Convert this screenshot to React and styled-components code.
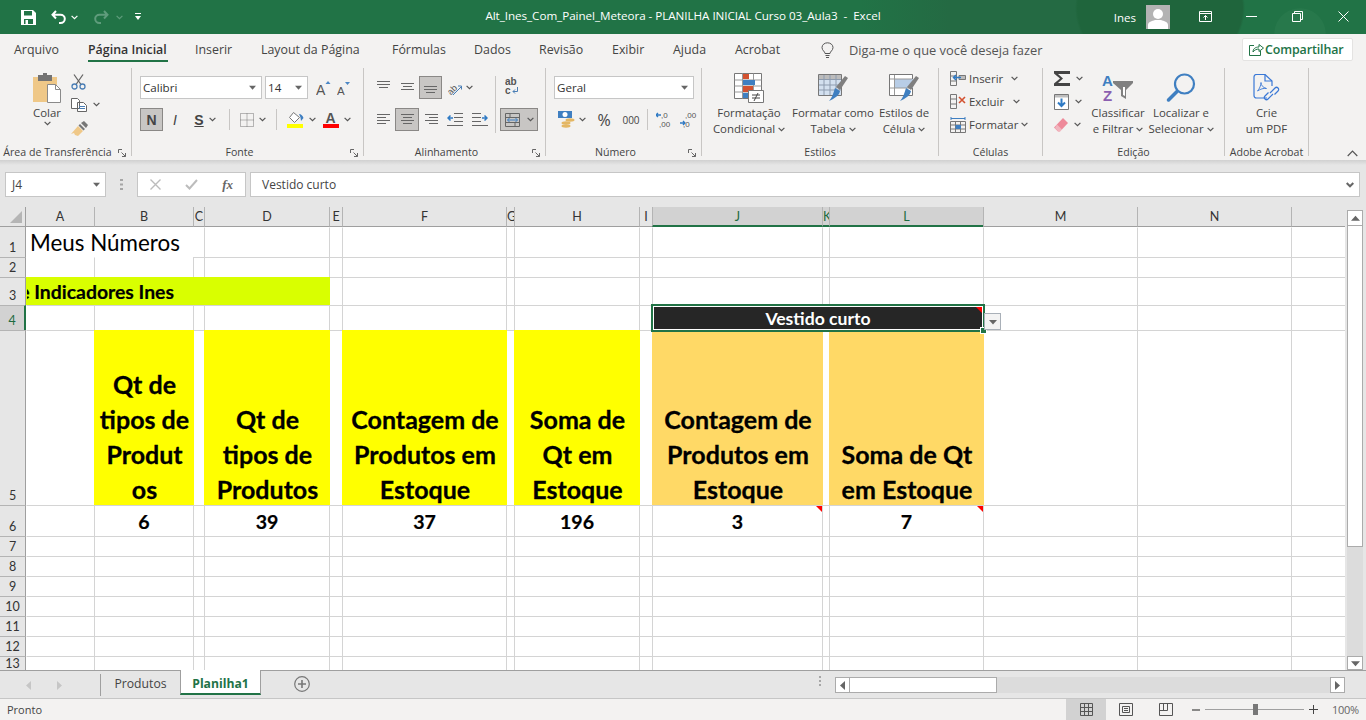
import React from 'react'
import styled, { createGlobalStyle } from 'styled-components'

const UI = `"Open Sans", "Noto Sans", sans-serif`
const SHEET = `Lato, "Liberation Sans", sans-serif`
const GREEN = '#217346'

const Global = createGlobalStyle`
  html, body { margin: 0; padding: 0; background: #fff; }
  body { font-family: ${UI}; overflow: hidden; }
  * { box-sizing: border-box; }
`

const Page = styled.div`
  width: 1366px;
  height: 720px;
  display: flex;
  flex-direction: column;
  overflow: hidden;
`

/* title bar */
const TitleBar = styled.div`
  height: 34px;
  flex: none;
  display: grid;
  grid-template-columns: 1fr auto 1fr;
  align-items: center;
  color: #fff;
  background:
    radial-gradient(ellipse 85px 70px at 1160px 8px, #1f653c 97%, transparent 100%),
    radial-gradient(circle 26px at 1300px 34px, #27784b 97%, transparent 100%),
    linear-gradient(90deg, ${GREEN} 0, ${GREEN} 860px, #246a43 950px, #246a43 1090px, ${GREEN} 1230px);
`
const Qat = styled.div`
  display: flex;
  align-items: center;
  padding-left: 21px;
`
const WinTitle = styled.div`
  font-size: 11.67px;
  white-space: pre;
  letter-spacing: -0.05px;
  padding-bottom: 3px;
`
const WinRight = styled.div`
  display: flex;
  align-items: center;
  justify-content: flex-end;
  font-size: 11.5px;
`
const Avatar = styled.div`
  width: 24px;
  height: 24px;
  margin-left: 10px;
  background: #b3b3b3;
  display: flex;
  align-items: flex-end;
  justify-content: center;
  margin-right: 12px;
`
const WinBtn = styled.div`
  width: 46px;
  height: 34px;
  display: flex;
  align-items: center;
  justify-content: center;
  padding-bottom: 1px;
`

/* tabs */
const TabRow = styled.div`
  height: 34px;
  flex: none;
  display: flex;
  align-items: flex-start;
  background: #f3f2f1;
  padding-left: 14px;
`
const Tab = styled.div`
  width: ${p => p.$w}px;
  height: 28px;
  font-size: 12.4px;
  line-height: 32px;
  color: #444;
  white-space: nowrap;
  flex: none;
`
const ActiveTabText = styled.span`
  display: inline-block;
  height: 28px;
  width: 80px;
  color: #333;
  font-weight: 600;
  letter-spacing: 0;
  border-bottom: 2px solid ${GREEN};
`
const Tell = styled.div`
  display: flex;
  align-items: center;
  gap: 15px;
  height: 32px;
  font-size: 12.85px;
  color: #555;
  white-space: nowrap;
`
const ShareBtn = styled.div`
  margin: 4px 13px 0 auto;
  width: 111px;
  height: 23px;
  background: #fff;
  border: 1px solid #e4e3e2;
  border-radius: 2px;
  display: flex;
  align-items: center;
  gap: 1px;
  padding-left: 6px;
  font-size: 12.4px;
  font-weight: 600;
  color: ${GREEN};
  letter-spacing: -0.1px;
`

/* ribbon */
const Ribbon = styled.div`
  height: 92px;
  flex: none;
  display: flex;
  background: #f3f2f1;
  padding-bottom: 4px;
`
const Group = styled.div`
  width: ${p => p.$w}px;
  flex: none;
  display: flex;
  flex-direction: column;
  border-right: 1px solid #c8c6c4;
`
const GroupBody = styled.div`
  flex: 1;
  display: flex;
  min-height: 0;
  padding-left: ${p => p.$pl || 0}px;
`
const GroupLabel = styled.div`
  height: 16px;
  padding-top: 5px;
  display: grid;
  grid-template-columns: 1fr ${p => (p.$launcher ? '16px' : '')};
  font-size: 10.6px;
  line-height: 15px;
  color: #444;
  text-align: center;
  white-space: nowrap;
`
const Launcher = styled.div`
  display: flex;
  align-items: center;
  justify-content: flex-start;
  padding-left: 3px;
`
const Stack = styled.div`
  display: flex;
  flex-direction: column;
  padding-top: ${p => p.$pt ?? 8}px;
  gap: ${p => p.$gap ?? 9}px;
  width: ${p => (p.$w ? `${p.$w}px` : 'auto')};
  flex: none;
`
const Row = styled.div`
  display: flex;
  align-items: center;
  height: 23px;
`
const Select = styled.div`
  width: ${p => p.$w}px;
  height: 23px;
  margin-right: ${p => p.$mr || 0}px;
  background: #fff;
  border: 1px solid #c6c6c6;
  display: flex;
  align-items: center;
  justify-content: space-between;
  padding: 0 5px 0 2px;
  font-size: 11.6px;
  color: #333;
  flex: none;
`
const Tool = styled.div`
  width: ${p => p.$w}px;
  height: 23px;
  flex: none;
  margin-left: ${p => p.$ml || 0}px;
  display: flex;
  align-items: center;
  justify-content: center;
  gap: ${p => p.$gap ?? 5}px;
  color: #444;
  ${p => p.$on && `
    background: #c8c6c4;
    border: 1px solid #8a8886;
  `}
`
const Letter = styled.span`
  font-family: "Liberation Sans", sans-serif;
  font-size: 14px;
  line-height: 1;
  color: #444;
  font-weight: ${p => (p.$b ? 700 : 400)};
  font-style: ${p => (p.$i ? 'italic' : 'normal')};
  text-decoration: ${p => (p.$u ? 'underline' : 'none')};
`
const NumGlyph = styled.span`
  font-size: ${p => p.$s}px;
  color: #444;
`
const VSep = styled.div`
  width: 1px;
  height: 21px;
  background: #c8c6c4;
  flex: none;
  margin: 0 ${p => p.$m || 0}px;
`
const TallSep = styled.div`
  width: 1px;
  height: 57px;
  background: #c8c6c4;
  margin-top: 8px;
  flex: none;
`
const Big = styled.div`
  width: ${p => p.$w}px;
  flex: none;
  display: flex;
  flex-direction: column;
  align-items: center;
  padding-top: 3px;
  font-size: 11.4px;
  line-height: 16px;
  color: #444;
  white-space: nowrap;
`
const BigIcon = styled.div`
  height: 34px;
  display: flex;
  align-items: center;
  justify-content: center;
`
const BigLine = styled.div`
  display: flex;
  align-items: center;
  gap: 3px;
`
const CellTool = styled.div`
  height: 23px;
  display: flex;
  align-items: center;
  font-size: 11.4px;
  color: #444;
`
const CellToolText = styled.span`
  width: ${p => p.$w}px;
  margin-left: 3px;
  white-space: nowrap;
`
const SmallCol = styled.div`
  display: flex;
  flex-direction: column;
  padding-top: ${p => p.$pt ?? 0}px;
  margin-top: ${p => p.$mt ?? 0}px;
  margin-left: ${p => p.$ml || 0}px;
  width: ${p => (p.$w ? `${p.$w}px` : 'auto')};
  flex: none;
`
const ClipTool = styled.div`
  height: ${p => p.$h}px;
  display: flex;
  align-items: center;
  gap: 6px;
`
const Collapse = styled.div`
  margin: 0 8px -3px auto;
  align-self: flex-end;
  height: 12px;
  display: flex;
  align-items: center;
`

/* formula bar */
const FormulaBar = styled.div`
  height: 47px;
  background: linear-gradient(#d0d0d0 0, #e6e6e6 5px);
  display: flex;
  align-items: flex-start;
  padding: 12px 6px 0 5px;
  flex: none;
`
const NameBox = styled.div`
  width: 101px;
  height: 25px;
  background: #fff;
  border: 1px solid #c6c6c6;
  display: flex;
  align-items: center;
  justify-content: space-between;
  padding: 0 5px 0 6px;
  font-size: 12px;
  color: #444;
`
const Dots = styled.div`
  width: 31px;
  height: 25px;
  display: flex;
  align-items: center;
  justify-content: center;
`
const FxBox = styled.div`
  width: 109px;
  height: 25px;
  background: #fff;
  border: 1px solid #c6c6c6;
  display: flex;
  align-items: center;
  justify-content: space-between;
  padding: 0 12px 0 12px;
`
const FxText = styled.span`
  font-family: "Liberation Serif", serif;
  font-style: italic;
  font-weight: 700;
  font-size: 13px;
  color: #666;
`
const FormulaInput = styled.div`
  flex: 1;
  margin-left: 4px;
  height: 25px;
  background: #fff;
  border: 1px solid #c6c6c6;
  display: flex;
  align-items: center;
  justify-content: space-between;
  padding: 0 5px 0 11px;
  font-size: 12px;
  color: #444;
`

/* sheet */
const SheetArea = styled.div`
  height: 463px;
  display: flex;
  flex: none;
  background: #e6e6e6;
`
const SheetGrid = styled.div`
  width: 1345px;
  height: 463px;
  flex: none;
  overflow: hidden;
  display: grid;
  grid-template-columns: 26px 68px 99px 11px 125px 13px 164px 8px 125px 13px 170px 7px 154px 154px 154px 54px;
  grid-template-rows: 20px 30px 20px 28px 25px 175px 31px 20px 20px 20px 20px 20px 20px 14px;
  font-family: ${SHEET};
  background: #fff;
`
const Corner = styled.div`
  background: #e6e6e6;
  border-right: 1px solid #9f9f9f;
  border-bottom: 1px solid #9f9f9f;
  display: flex;
  align-items: flex-end;
  justify-content: flex-end;
  padding: 0 3px 3px 0;
`
const ColHead = styled.div`
  background: ${p => (p.$sel ? '#d2d2d2' : '#e6e6e6')};
  border-left: ${p => (p.$first ? 'none' : '1px solid #b4b4b4')};
  border-bottom: ${p => (p.$sel ? `2px solid ${GREEN}` : '1px solid #9f9f9f')};
  color: ${p => (p.$sel ? '#1d6b40' : '#333')};
  font-size: 12.5px;
  text-align: center;
  line-height: 20px;
  overflow: hidden;
`
const RowHead = styled.div`
  background: ${p => (p.$sel ? '#d2d2d2' : '#e6e6e6')};
  border-top: ${p => (p.$first ? 'none' : '1px solid #b4b4b4')};
  border-right: ${p => (p.$sel ? `2px solid ${GREEN}` : '1px solid #9f9f9f')};
  color: ${p => (p.$sel ? '#1d6b40' : '#333')};
  font-size: 12.5px;
  line-height: 19px;
  display: flex;
  align-items: flex-end;
  justify-content: center;
  overflow: hidden;
  ${p => p.$clip && 'align-items: flex-start; line-height: 14px;'}
`
const Cell = styled.div`
  position: relative;
  min-width: 0;
  min-height: 0;
  grid-column: span ${p => p.$span || 1};
  border-left: 1px solid ${p => p.$fill || (p.$noLeft ? 'transparent' : '#d4d4d4')};
  border-top: 1px solid ${p => p.$fill || (p.$noTop ? 'transparent' : '#d4d4d4')};
  ${p => p.$fill && `
    background: ${p.$fill};
    margin-right: -1px;
    z-index: 1;
  `}
`
const TitleCell = styled(Cell)`
  font-size: 22.4px;
  line-height: 28px;
  padding: 1px 0 0 3px;
  color: #000;
  white-space: nowrap;
  overflow: visible;
`
const BannerCell = styled(Cell)`
  display: flex;
  align-items: center;
  justify-content: flex-end;
  padding-right: 156px;
  font-size: 19.4px;
  font-weight: 700;
  -webkit-text-stroke: 0.2px #000;
  color: #000;
  overflow: hidden;
  white-space: nowrap;
`
const HeadCell = styled(Cell)`
  display: flex;
  align-items: flex-end;
  justify-content: center;
  text-align: center;
  font-size: 25px;
  line-height: 35px;
  font-weight: 700;
  -webkit-text-stroke: 0.3px #000;
  color: #000;
  white-space: nowrap;
`
const HeadLines = styled.div`
  margin-bottom: -2px;
`
const ValueCell = styled(Cell)`
  display: flex;
  align-items: center;
  justify-content: center;
  font-size: 19.6px;
  font-weight: 700;
  -webkit-text-stroke: 0.2px #000;
  color: #000;
  padding-top: 1px;
`
const Note = styled.i`
  position: absolute;
  top: ${p => p.$t ?? 0}px;
  right: ${p => p.$r ?? 0}px;
  width: 0;
  height: 0;
  border-top: 6px solid #f00;
  border-left: 6px solid transparent;
`
const Selection = styled.div`
  position: absolute;
  left: -2px;
  top: -2px;
  right: -2px;
  bottom: -2px;
  border: 2px solid ${GREEN};
  box-shadow: inset 0 0 0 1px #fff;
  background: #262626;
  color: #fff;
  font-size: 17.6px;
  font-weight: 700;
  display: flex;
  align-items: center;
  justify-content: center;
  z-index: 3;
`
const FillHandle = styled.i`
  position: absolute;
  right: -4px;
  bottom: -4px;
  width: 7px;
  height: 7px;
  background: ${GREEN};
  border: 1px solid #fff;
`
const DropBtn = styled.div`
  position: absolute;
  left: calc(100% + 1px);
  bottom: 0;
  width: 17px;
  height: 17px;
  background: #f3f3f3;
  border: 1px solid #a9b0b8;
  display: flex;
  align-items: center;
  justify-content: center;
`

/* scrollbars */
const VScroll = styled.div`
  width: 21px;
  flex: none;
  display: flex;
  flex-direction: column;
  padding: 3px 3px 0 2px;
`
const ScrollBtn = styled.div`
  height: ${p => p.$h || 16}px;
  width: ${p => p.$w || 16}px;
  background: #fff;
  border: 1px solid #ababab;
  display: flex;
  align-items: center;
  justify-content: center;
  flex: none;
`
const VThumb = styled.div`
  height: 321px;
  background: #fff;
  border: 1px solid #ababab;
  border-top: none;
  flex: none;
`
const VTrack = styled.div`
  flex: 1;
  background: #dcdcdc;
`

/* bottom */
const SheetTabs = styled.div`
  height: 28px;
  flex: none;
  background: #e6e6e6;
  border-top: 1px solid #9f9f9f;
  display: flex;
  align-items: flex-start;
`
const NavArrows = styled.div`
  width: 101px;
  height: 22px;
  border-right: 1px solid #9f9f9f;
  display: flex;
  align-items: center;
  gap: 26px;
  padding-left: 26px;
  margin-top: 3px;
`
const SheetTab = styled.div`
  height: 24px;
  width: ${p => p.$w}px;
  text-align: center;
  font-family: ${UI};
  font-size: 12.2px;
  line-height: 26px;
  flex: none;
  color: #444;
  ${p => p.$active && `
    background: #fff;
    color: ${GREEN};
    font-weight: 700;
    border-left: 1px solid #9f9f9f;
    border-right: 1px solid #9f9f9f;
    border-bottom: 2px solid ${GREEN};
    margin-top: -1px;
    height: 25px;
    line-height: 27px;
  `}
`
const AddSheet = styled.div`
  margin-left: 33px;
  margin-top: 5px;
  display: flex;
`
const HSplit = styled.div`
  margin-left: auto;
  margin-top: 5px;
  width: 30px;
  display: flex;
  justify-content: center;
`
const HScroll = styled.div`
  width: 510px;
  margin-right: 21px;
  margin-top: 6px;
  height: 16px;
  display: flex;
  background: #dcdcdc;
`
const HThumb = styled.div`
  width: 147px;
  background: #fff;
  border: 1px solid #ababab;
  border-left: none;
  flex: none;
`
const HTrack = styled.div`
  flex: 1;
`
const StatusBar = styled.div`
  height: 22px;
  flex: none;
  background: #f3f2f1;
  border-top: 1px solid #c6c6c6;
  display: flex;
  align-items: center;
  padding-left: 7px;
  font-size: 11px;
  color: #444;
`
const Views = styled.div`
  margin-left: auto;
  display: flex;
`
const ViewBtn = styled.div`
  width: 40px;
  height: 21px;
  flex: none;
  display: flex;
  align-items: center;
  justify-content: center;
  background: ${p => (p.$on ? '#d2d2d2' : 'transparent')};
`
const Zoom = styled.div`
  margin: 0 6px 0 6px;
  display: flex;
  align-items: center;
`
const ZoomTrack = styled.div`
  width: 99px;
  height: 1px;
  margin: 0 5px;
  background: #a0a0a0;
  position: relative;
`
const ZoomThumb = styled.i`
  position: absolute;
  left: 48px;
  top: -5px;
  width: 5px;
  height: 11px;
  background: #777;
`
const ZoomPct = styled.span`
  margin-left: 14px;
  width: 28px;
  color: #666;
  white-space: nowrap;
  letter-spacing: -0.3px;
`
const Mirror = styled.span`
  display: flex;
  transform: scaleX(-1);
`
const TriSvg = styled.svg`
  transform: rotate(${p => p.$r || 0}deg);
`

/* icons */
const Chev = ({ c = '#555', w = 7 }) => (
  <svg width={w} height="5" viewBox="0 0 7 5" fill="none" stroke={c} strokeWidth="1.2"><path d="M.6.8 3.5 3.7 6.4.8" /></svg>
)
const Tri = ({ c = '#666', r = 0, s = 7 }) => (
  <TriSvg $r={r} width={s} height={s} viewBox="0 0 8 8" fill={c}><path d="M0 2h8L4 6.500z" /></TriSvg>
)
const SaveIcon = () => (
  <svg width="15" height="15" viewBox="0 0 15 15">
    <path fill="#fff" d="M0 0h12l3 3v12H0z" />
    <path fill={GREEN} d="M3 1h8v4.500H3zM3 9h9v5H3z" />
    <path fill="#fff" d="M4.500 10h2.500v4H4.500z" />
  </svg>
)
const UndoIcon = ({ c = '#fff' }) => (
  <svg width="15" height="14" viewBox="0 0 15 14" fill="none" stroke={c} strokeWidth="2"><path d="M5 1 1.500 4.800 5 8.500M1.500 4.800H9.500C12 4.800 13.800 6.500 13.800 8.800 13.800 11 12 13 9.500 13H8" /></svg>
)
const RedoIcon = () => (
  <svg width="15" height="14" viewBox="0 0 15 14" fill="none" stroke="#5f9c7c" strokeWidth="2"><path d="M10 1l3.500 3.800L10 8.500M13.500 4.800H5.500C3 4.800 1.200 6.500 1.200 8.800 1.200 11 3 13 5.500 13H7" /></svg>
)
const QatMore = () => (
  <svg width="6" height="8" viewBox="0 0 6 8" fill="#fff"><path d="M0 0h6v1H0zM0 3h6L3 7z" /></svg>
)
const PersonIcon = () => (
  <svg width="22" height="21" viewBox="0 0 22 21" fill="#fff"><circle cx="11" cy="6" r="5" /><path d="M1 21v-4c0-3 4-4 7-5h6c3 1 7 2 7 5v4z" /></svg>
)
const RibbonModeIcon = () => (
  <svg width="13" height="11" viewBox="0 0 13 11" fill="none" stroke="#fff"><path d="M.5.500h12v10H.500zM.5 2.500h12M6.500 9V4.500M4.500 6.500l2-2 2 2" /></svg>
)
const MinIcon = () => <svg width="11" height="1"><path d="M0 .5h11" stroke="#fff" /></svg>
const RestoreIcon = () => (
  <svg width="11" height="11" viewBox="0 0 11 11" fill="none" stroke="#fff"><path d="M.5 2.500h8v8h-8zM2.500 2.500v-2h8v8h-2" /></svg>
)
const CloseIcon = () => (
  <svg width="11" height="11" viewBox="0 0 11 11" stroke="#fff"><path d="M.5.500l10 10M10.500.500l-10 10" /></svg>
)
const BulbIcon = () => (
  <svg width="13" height="17" viewBox="0 0 13 17" fill="none" stroke="#555"><path d="M4 11.500C4 9.500 1 8.500 1 5.500 1 2.800 3.500.800 6.500.800S12 2.800 12 5.500c0 3-3 4-3 6zM4.500 13.500h4M5 15.500h3" /></svg>
)
const ShareIcon = () => (
  <svg width="15" height="13" viewBox="0 0 15 13" fill="none" stroke={GREEN}><path d="M5 2.500H.5v10h11V8M4 9c0-3 2-5 6-5V1.500L14.500 5 10 8.500V6C7.500 6 5.500 7 4 9z" /></svg>
)
const PasteIcon = () => (
  <svg width="30" height="30" viewBox="0 0 30 30">
    <path fill="#efc888" d="M1 4h24v25H1z" />
    <path fill="#737373" d="M6 2h5V0h4v2h5v6H6z" />
    <path fill="#fff" stroke="#8a8a8a" d="M15.500 11.500h8l5 5v13h-13z" />
    <path fill="none" stroke="#8a8a8a" d="M23.500 11.500v5h5" />
  </svg>
)
const CutIcon = () => (
  <svg width="15" height="16" viewBox="0 0 15 16" fill="none">
    <path stroke="#666" strokeWidth="1.300" d="M3 .500l7 10M12 .500l-7 10" />
    <circle cx="3.500" cy="12.500" r="2.500" stroke="#4a7eb5" strokeWidth="1.300" />
    <circle cx="11.500" cy="12.500" r="2.500" stroke="#4a7eb5" strokeWidth="1.300" />
  </svg>
)
const CopyIcon = () => (
  <svg width="16" height="14" viewBox="0 0 16 14" fill="#fff" stroke="#666"><path d="M.5.500h6l2 2v8h-8zM6.500 4.500h6l3 3v6h-9z" /><path fill="none" stroke="#4a7eb5" d="M8 8.500h6M8 10.500h6" /></svg>
)
const PainterIcon = () => (
  <svg width="17" height="15" viewBox="0 0 17 15"><path fill="#777" d="M10 2l3-2 4 4-2 3zM9 3l5 5-1.500 1.500-5-5z" /><path fill="#efc888" d="M7 5l5 5-5 5-3-1-1-2-3 1z" /></svg>
)
const GrowIcon = () => (
  <svg width="15" height="18" viewBox="0 0 15 18"><text x="0" y="16" fontFamily="Liberation Sans" fontSize="14" fill="#555">A</text><path fill="#4a86c5" d="M9.500 5l2.500-3 2.500 3z" /></svg>
)
const ShrinkIcon = () => (
  <svg width="14" height="18" viewBox="0 0 14 18"><text x="0" y="16" fontFamily="Liberation Sans" fontSize="11.500" fill="#555">A</text><path fill="#4a86c5" d="M8 3h5l-2.500 3z" /></svg>
)
const BorderIcon = () => (
  <svg width="14" height="14" viewBox="0 0 14 14" fill="none" stroke="#777" strokeDasharray="1 1"><path d="M.5.500h13v13H.500zM7 .500v13M.5 7h13" /></svg>
)
const FillColorIcon = () => (
  <svg width="17" height="17" viewBox="0 0 17 17">
    <path fill="#fff" stroke="#777" d="M6.500 1.500l6 5-5 5-5-5z" />
    <path fill="#3f7fc1" d="M12 3c2 0 4 2 4.500 4L14 10l-.5-3.500z" />
    <path fill="#ff0" d="M0 13h16v4H0z" />
  </svg>
)
const FontColorIcon = () => (
  <svg width="16" height="17" viewBox="0 0 16 17">
    <text x="2.500" y="11.500" fontFamily="Liberation Sans" fontWeight="700" fontSize="14" fill="#555">A</text>
    <path fill="#f00" d="M0 13h16v4H0z" />
  </svg>
)
const Launch = () => (
  <svg width="8" height="8" viewBox="0 0 8 8" fill="none" stroke="#666"><path d="M.5 4V.5H4M7.500 7.500l-4-4M7.500 4v3.500H4" /></svg>
)
const Lines = ({ rows }) => (
  <svg width="15" height="15" viewBox="0 0 15 15" stroke="#666">
    {rows.map(([y, a, b]) => <path key={y} d={`M${a} ${y}.5H${b}`} />)}
  </svg>
)
const OrientIcon = () => (
  <svg width="16" height="16" viewBox="0 0 16 16">
    <text x="2" y="15" transform="rotate(-45 4 12)" fontFamily="Liberation Sans" fontSize="9" fill="#555">ab</text>
    <path fill="none" stroke="#4a7eb5" d="M7 15 15 7M12 6h3.500v3.500" />
  </svg>
)
const WrapIcon = () => (
  <svg width="14" height="19" viewBox="0 0 14 19">
    <text x="0" y="8" fontFamily="Liberation Sans" fontSize="10" fontWeight="700" fill="#555">ab</text>
    <text x="0" y="17" fontFamily="Liberation Sans" fontSize="10" fontWeight="700" fill="#555">c</text>
    <path fill="none" stroke="#4a7eb5" d="M12.500 10v4.500H8M10 12.500l-2 2 2 2" />
  </svg>
)
const MergeIcon = () => (
  <svg width="15" height="14" viewBox="0 0 15 14" fill="none">
    <path stroke="#666" d="M.5.500h14v13H.500zM.5 4.500h14M.5 9.500h14M5 .500v4M10 9.500v4" />
    <path stroke="#3f7fc1" d="M2.500 7h10M4.500 5l-2 2 2 2M10.500 5l2 2-2 2" />
  </svg>
)
const OutIcon = () => (
  <svg width="16" height="13" viewBox="0 0 16 13">
    <path stroke="#666" d="M7 .500h9M7 4.500h9M7 8.500h9M0 12.500h16" />
    <path fill="none" stroke="#2f7ac4" strokeWidth="1.500" d="M1 5h5M3.500 2.500 1 5l2.500 2.500" />
  </svg>
)
const CurrencyIcon = () => (
  <svg width="17" height="17" viewBox="0 0 17 17">
    <path fill="#3f7fc1" d="M0 0h14v7H0z" />
    <circle cx="7" cy="3.500" r="2.500" fill="#fff" />
    <ellipse cx="12" cy="9" rx="4.500" ry="1.700" fill="#e4b764" />
    <ellipse cx="8" cy="12" rx="4.500" ry="1.700" fill="#e4b764" />
    <ellipse cx="8" cy="15" rx="4.500" ry="1.700" fill="#e4b764" />
  </svg>
)
const IncDec = ({ flip }) => (
  <svg width="17" height="18" viewBox="0 0 17 18" fontFamily="Liberation Sans" fontSize="8" fill="#555">
    <text x="5" y="7">{flip ? ',00' : ',0'}</text>
    <text x="3" y="16">{flip ? ',0' : ',00'}</text>
    <path fill="none" stroke="#2f7ac4" strokeWidth="1.300" d={flip ? 'M0 12h5M3 10l2 2-2 2' : 'M0 4h5M2 2 0 4l2 2'} />
  </svg>
)
const CondIcon = () => (
  <svg width="30" height="30" viewBox="0 0 30 30">
    <path fill="#fff" stroke="#777" d="M.5.500h27v25H.500z" />
    <path stroke="#999" d="M8.500 .500v25M19.500.500v25M.5 7h27M.5 13h27M.5 19h27" />
    <path fill="#d35230" d="M9 1h6v5H9zM9 13h10v6H9z" />
    <path fill="#3f7fc1" d="M9 7h12v5H9zM9 20h5v5H9z" />
    <path fill="#fff" stroke="#777" d="M14.500 17.500h15v12h-15z" />
    <path stroke="#444" d="M18 22h8M18 25h8M24 20l-4 8" />
  </svg>
)
const TableIcon = () => (
  <svg width="30" height="30" viewBox="0 0 30 30">
    <path fill="#d3e0ef" stroke="#777" d="M.5 1.500h23v21H.500z" />
    <path fill="#bcbcbc" d="M1 2h22v4H1z" />
    <path stroke="#8e9caf" d="M6 2v20M12 2v20M18 2v20M1 6.500h22M1 12h22M1 17h22" />
    <path fill="#7f7f7f" d="M27 3l3 2-8 12-4-3z" />
    <path fill="#3f7fc1" d="M17 15l5 3c-1 5-5 7-11 10 3-3 4-7 6-13z" />
  </svg>
)
const CellStyleIcon = () => (
  <svg width="30" height="30" viewBox="0 0 30 30">
    <path fill="#fff" stroke="#777" d="M.5 1.500h23v21H.500z" />
    <path fill="#b8cde6" d="M6 6h18v9H6z" />
    <path stroke="#999" d="M5.500 2v20M1 6h22M1 15h22" />
    <path fill="#7f7f7f" d="M27 3l3 2-8 12-4-3z" />
    <path fill="#3f7fc1" d="M17 15l5 3c-1 5-5 7-11 10 3-3 4-7 6-13z" />
  </svg>
)
const InsertIcon = () => (
  <svg width="16" height="15" viewBox="0 0 16 15" fill="none">
    <path stroke="#777" d="M.5.500h6v14h-6zM.5 5h6M.5 10h6" />
    <path fill="#bcbcbc" stroke="#777" d="M9 4.500h6.500v4H9z" />
    <path stroke="#2f7ac4" strokeWidth="1.500" d="M11 6.500H4M6 4 3.500 6.500 6 9" />
  </svg>
)
const DeleteIcon = () => (
  <svg width="16" height="15" viewBox="0 0 16 15" fill="none">
    <path stroke="#777" d="M.5.500h6v14h-6zM.5 5h6M.5 10h6" />
    <path stroke="#d35230" strokeWidth="1.600" d="M9 3l6 6M15 3l-6 6" />
  </svg>
)
const FormatIcon = () => (
  <svg width="16" height="16" viewBox="0 0 16 16" fill="none">
    <path stroke="#777" d="M.5 4.500h15v11H.500zM5.500 4.500v11M10.500 4.500v11M.5 8h15M.5 12h15" />
    <path fill="#3f7fc1" d="M5.500 8H11v4H5.500z" />
    <path stroke="#3f7fc1" d="M1 1.500h14M1 0v3M15 0v3" />
  </svg>
)
const SigmaIcon = () => (
  <svg width="16" height="15" viewBox="0 0 16 15" fill="#444"><path d="M0 0h16v3H4l5 4.500L4 12h12v3H0v-2.500L6 7.500 0 2.500z" /></svg>
)
const FillDownIcon = () => (
  <svg width="15" height="16" viewBox="0 0 15 16">
    <path fill="#fff" stroke="#777" d="M.5.500h14v15H.500z" />
    <path fill="#bdbdbd" d="M1 1h13v2.500H1z" />
    <path fill="none" stroke="#2f7ac4" strokeWidth="2" d="M7.500 4.500v7M4 8.500l3.500 3.500L11 8.500" />
  </svg>
)
const EraserIcon = () => (
  <svg width="14" height="14" viewBox="0 0 14 14" fill="#ee8a9a"><path d="M9 0l5 5-8 8.500H4L0 9.500z" /><path fill="#f4f4f4" opacity=".4" d="M3 6.500l5 5-1.500 1.500H4L1 10z" /></svg>
)
const SortIcon = () => (
  <svg width="32" height="30" viewBox="0 0 32 30" fontFamily="Liberation Sans" fontWeight="700" fontSize="15">
    <text x="0" y="13" fill="#3f7fc1">A</text>
    <text x="1" y="28" fill="#8b5fb0">Z</text>
    <path fill="#808080" d="M11 8h20v2l-7 7v9l-5-3v-6l-8-7z" />
    <path fill="#fff" d="M21 14h2v9l-2-1z" />
  </svg>
)
const FindIcon = () => (
  <svg width="30" height="30" viewBox="0 0 30 30" fill="none">
    <circle cx="18.500" cy="11" r="9.500" stroke="#3f7fc1" strokeWidth="2.200" />
    <path stroke="#3f7fc1" strokeWidth="3.500" strokeLinecap="round" d="M11 18.500 2.500 27" />
  </svg>
)
const PdfIcon = () => (
  <svg width="27" height="28" viewBox="0 0 27 28" fill="none" stroke="#3a78d6" strokeWidth="1.200">
    <path d="M14 24H3.500c-1.500 0-2.500-1-2.500-2.500V3C1 1.500 2 .500 3.500.500H12L19 7v5" />
    <path d="M12 .500V7h7" />
    <path d="M4.500 17c2-2 3.500-6 3.500-8.500 0 3 2 5 5.500 6-3-.500-6 .500-9 2.500z" strokeWidth=".900" />
    <path d="M17 19l5-5c2-2 5 1 3 3l-3.500 3.500M20 20l-5 5c-2 2-5-1-3-3l3.500-3.500" />
  </svg>
)
const DotsIcon = () => (
  <svg width="3" height="11" viewBox="0 0 3 11" fill="#a6a6a6"><path d="M0 0h3v2H0zM0 4.500h3v2H0zM0 9h3v2H0z" /></svg>
)
const CancelIcon = () => (
  <svg width="11" height="11" viewBox="0 0 11 11" stroke="#bcbcbc" strokeWidth="1.400"><path d="M.5.500l10 10M10.500.500l-10 10" /></svg>
)
const EnterIcon = () => (
  <svg width="13" height="11" viewBox="0 0 13 11" fill="none" stroke="#bcbcbc" strokeWidth="2"><path d="M1 6l3.500 3.500L12 1" /></svg>
)
const FormulaChev = () => (
  <svg width="8" height="6" viewBox="0 0 8 6" fill="none" stroke="#666" strokeWidth="2"><path d="M.7 1 4 4.300 7.300 1" /></svg>
)
const CornerTri = () => (
  <svg width="12" height="12" viewBox="0 0 12 12" fill="#b5b5b5"><path d="M12 0v12H0z" /></svg>
)
const SideTri = ({ c = '#666' }) => (
  <svg width="5" height="9" viewBox="0 0 5 9" fill={c}><path d="M0 0l5 4.500L0 9z" /></svg>
)
const PlusCircle = () => (
  <svg width="16" height="16" viewBox="0 0 16 16" fill="none" stroke="#777"><circle cx="8" cy="8" r="7.300" strokeWidth="1.200" /><path strokeWidth="1.600" d="M8 4v8M4 8h8" /></svg>
)
const SplitDots = () => (
  <svg width="2" height="11" viewBox="0 0 2 11" fill="#a6a6a6"><path d="M0 0h2v2H0zM0 4h2v2H0zM0 8h2v2H0z" /></svg>
)
const ViewNormal = () => (
  <svg width="13" height="13" viewBox="0 0 13 13" fill="none" stroke="#555"><path d="M.5.500h12v12H.500zM4.500.500v12M8.500.500v12M.5 4.500h12M.5 8.500h12" /></svg>
)
const ViewLayout = () => (
  <svg width="14" height="13" viewBox="0 0 14 13" fill="none" stroke="#555"><path d="M.5.500h13v12H.500zM3.500 3.500h7v6h-7zM5 5.500h4M5 7.500h4" /></svg>
)
const ViewBreak = () => (
  <svg width="14" height="13" viewBox="0 0 14 13" fill="none" stroke="#555"><path d="M.5.500h13v12H.500zM.5 7.500h8v-7M4.500.500v7" /></svg>
)

const TABS = [
  ['Arquivo', 74], ['Página Inicial', 107, true], ['Inserir', 66], ['Layout da Página', 131],
  ['Fórmulas', 82], ['Dados', 65], ['Revisão', 73], ['Exibir', 61], ['Ajuda', 62], ['Acrobat', 86]
]

const COLS = 'ABCDEFGHIJKLMNO'.split('')
const ROW_COUNT = 13
const HEADERS = {
  B: [['Qt de', 'tipos de', 'Produt', 'os'], '#ffff00'],
  D: [['Qt de', 'tipos de', 'Produtos'], '#ffff00'],
  F: [['Contagem de', 'Produtos em', 'Estoque'], '#ffff00'],
  H: [['Soma de', 'Qt em', 'Estoque'], '#ffff00'],
  J: [['Contagem de', 'Produtos em', 'Estoque'], '#ffd966'],
  L: [['Soma de Qt', 'em Estoque'], '#ffd966']
}
const VALUES = { B: '6', D: '39', F: '37', H: '196', J: '3', L: '7' }

const renderCells = () => {
  const out = []
  for (let r = 1; r <= ROW_COUNT; r++) {
    out.push(
      <RowHead key={`h${r}`} $sel={r === 4} $clip={r === 13} $first={r === 1}>{r}</RowHead>
    )
    for (let i = 0; i < COLS.length; i++) {
      const c = COLS[i]
      const key = `${c}${r}`
      const noLeft = i === 0
      if (r === 1 && i === 0) {
        out.push(<TitleCell key={key} $span={3} $noLeft $noTop>Meus Números</TitleCell>)
        i = 2
      } else if (r === 3 && i === 0) {
        out.push(<BannerCell key={key} $span={4} $fill="#d9ff00">e Indicadores Ines</BannerCell>)
        i = 3
      } else if (r === 4 && c === 'J') {
        out.push(
          <Cell key={key} $span={3}>
            <Selection>
              Vestido curto
              <Note $t={1} $r={1} />
              <FillHandle />
              <DropBtn><Tri s={8} /></DropBtn>
            </Selection>
          </Cell>
        )
        i += 2
      } else if (r === 5 && HEADERS[c]) {
        const [lines, fill] = HEADERS[c]
        out.push(
          <HeadCell key={key} $fill={fill}>
            <HeadLines>{lines.map(l => <div key={l}>{l}</div>)}</HeadLines>
          </HeadCell>
        )
      } else if (r === 6 && VALUES[c]) {
        out.push(
          <ValueCell key={key} $noLeft={noLeft}>
            {VALUES[c]}
            {(c === 'J' || c === 'L') && <Note />}
          </ValueCell>
        )
      } else {
        out.push(<Cell key={key} $noLeft={noLeft} $noTop={r === 1 || (r === 2 && i < 2)} />)
      }
    }
  }
  return out
}

const ALIGN_TOP = [[1, 1, 14], [4, 1, 14], [7, 3, 12]]
const ALIGN_MID = [[3, 1, 14], [6, 3, 12], [9, 1, 14]]
const ALIGN_BOT = [[6, 1, 14], [9, 1, 14], [12, 3, 12]]
const ALIGN_L = [[2, 1, 14], [5, 1, 10], [8, 1, 14], [11, 1, 10]]
const ALIGN_C = [[2, 1, 14], [5, 3, 12], [8, 1, 14], [11, 3, 12]]
const ALIGN_R = [[2, 1, 14], [5, 5, 14], [8, 1, 14], [11, 5, 14]]

export default function App() {
  return (
    <Page>
      <Global />
      <TitleBar>
        <Qat>
          <SaveIcon />
          <Tool $w={15} />
          <UndoIcon />
          <Tool $w={16}><Chev c="#fff" /></Tool>
          <Tool $w={12} />
          <RedoIcon />
          <Tool $w={20}><Chev c="#5f9c7c" /></Tool>
          <Tool $w={18}><QatMore /></Tool>
        </Qat>
        <WinTitle>{'Alt_Ines_Com_Painel_Meteora - PLANILHA INICIAL Curso 03_Aula3  -  Excel'}</WinTitle>
        <WinRight>
          Ines
          <Avatar><PersonIcon /></Avatar>
          <WinBtn><RibbonModeIcon /></WinBtn>
          <WinBtn><MinIcon /></WinBtn>
          <WinBtn><RestoreIcon /></WinBtn>
          <WinBtn><CloseIcon /></WinBtn>
        </WinRight>
      </TitleBar>

      <TabRow>
        {TABS.map(([t, w, on]) => (
          <Tab key={t} $w={w}>{on ? <ActiveTabText>{t}</ActiveTabText> : t}</Tab>
        ))}
        <Tell><BulbIcon />Diga-me o que você deseja fazer</Tell>
        <ShareBtn><ShareIcon />Compartilhar</ShareBtn>
      </TabRow>

      <Ribbon>
        <Group $w={132}>
          <GroupBody $pl={30}>
            <Big $w={34}>
              <BigIcon><PasteIcon /></BigIcon>
              Colar
              <BigLine><Chev /></BigLine>
            </Big>
            <SmallCol $ml={7} $pt={2}>
              <ClipTool $h={25}><CutIcon /></ClipTool>
              <ClipTool $h={25}><CopyIcon /><Chev /></ClipTool>
              <ClipTool $h={25}><PainterIcon /></ClipTool>
            </SmallCol>
          </GroupBody>
          <GroupLabel $launcher>Área de Transferência<Launcher><Launch /></Launcher></GroupLabel>
        </Group>

        <Group $w={232}>
          <GroupBody $pl={8}>
            <Stack>
              <Row>
                <Select $w={122} $mr={3}>Calibri<Tri /></Select>
                <Select $w={43} $mr={8}>14<Tri /></Select>
                <Tool $w={15}><GrowIcon /></Tool>
                <Tool $w={26}><ShrinkIcon /></Tool>
              </Row>
              <Row>
                <Tool $w={23} $on><Letter $b>N</Letter></Tool>
                <Tool $w={24}><Letter $i>I</Letter></Tool>
                <Tool $w={36}><Letter $b $u>S</Letter><Chev /></Tool>
                <VSep $m={6} />
                <Tool $w={34}><BorderIcon /><Chev /></Tool>
                <VSep $m={6} />
                <Tool $w={36}><FillColorIcon /><Chev /></Tool>
                <Tool $w={36}><FontColorIcon /><Chev /></Tool>
              </Row>
            </Stack>
          </GroupBody>
          <GroupLabel $launcher>Fonte<Launcher><Launch /></Launcher></GroupLabel>
        </Group>

        <Group $w={182}>
          <GroupBody $pl={7}>
            <Stack $w={124}>
              <Row>
                <Tool $w={24}><Lines rows={ALIGN_TOP} /></Tool>
                <Tool $w={24}><Lines rows={ALIGN_MID} /></Tool>
                <Tool $w={23} $on><Lines rows={ALIGN_BOT} /></Tool>
                <Tool $w={34} $gap={4}><OrientIcon /><Chev /></Tool>
              </Row>
              <Row>
                <Tool $w={24}><Lines rows={ALIGN_L} /></Tool>
                <Tool $w={24} $on><Lines rows={ALIGN_C} /></Tool>
                <Tool $w={24}><Lines rows={ALIGN_R} /></Tool>
                <Tool $w={24}><OutIcon /></Tool>
                <Tool $w={26}><Mirror><OutIcon /></Mirror></Tool>
              </Row>
            </Stack>
            <TallSep />
            <Stack $pt={7} $gap={10}>
              <Row><Tool $w={32}><WrapIcon /></Tool></Row>
              <Row><Tool $w={38} $ml={4} $on $gap={7}><MergeIcon /><Chev /></Tool></Row>
            </Stack>
          </GroupBody>
          <GroupLabel $launcher>Alinhamento<Launcher><Launch /></Launcher></GroupLabel>
        </Group>

        <Group $w={156}>
          <GroupBody $pl={8}>
            <Stack>
              <Row><Select $w={140}>Geral<Tri /></Select></Row>
              <Row>
                <Tool $w={36} $gap={4}><CurrencyIcon /><Chev /></Tool>
                <Tool $w={20} $ml={4}><NumGlyph $s={16}>%</NumGlyph></Tool>
                <Tool $w={26} $ml={4}><NumGlyph $s={10}>000</NumGlyph></Tool>
                <VSep $m={3} />
                <Tool $w={26}><IncDec /></Tool>
                <Tool $w={22}><IncDec flip /></Tool>
              </Row>
            </Stack>
          </GroupBody>
          <GroupLabel $launcher>Número<Launcher><Launch /></Launcher></GroupLabel>
        </Group>

        <Group $w={237}>
          <GroupBody $pl={8}>
            <Big $w={78}>
              <BigIcon><CondIcon /></BigIcon>
              Formatação
              <BigLine>Condicional <Chev /></BigLine>
            </Big>
            <Big $w={90}>
              <BigIcon><TableIcon /></BigIcon>
              Formatar como
              <BigLine>Tabela <Chev /></BigLine>
            </Big>
            <Big $w={52}>
              <BigIcon><CellStyleIcon /></BigIcon>
              Estilos de
              <BigLine>Célula <Chev /></BigLine>
            </Big>
          </GroupBody>
          <GroupLabel>Estilos</GroupLabel>
        </Group>

        <Group $w={104}>
          <GroupBody $pl={11}>
            <SmallCol $mt={-1}>
              <CellTool><InsertIcon /><CellToolText $w={42}>Inserir</CellToolText><Chev /></CellTool>
              <CellTool><DeleteIcon /><CellToolText $w={44}>Excluir</CellToolText><Chev /></CellTool>
              <CellTool><FormatIcon /><CellToolText $w={52}>Formatar</CellToolText><Chev /></CellTool>
            </SmallCol>
          </GroupBody>
          <GroupLabel>Células</GroupLabel>
        </Group>

        <Group $w={182}>
          <GroupBody $pl={11}>
            <SmallCol $w={31} $mt={-1}>
              <ClipTool $h={23}><SigmaIcon /><Chev /></ClipTool>
              <ClipTool $h={23}><FillDownIcon /><Chev /></ClipTool>
              <ClipTool $h={23}><EraserIcon /><Chev /></ClipTool>
            </SmallCol>
            <Big $w={66}>
              <BigIcon><SortIcon /></BigIcon>
              Classificar
              <BigLine>e Filtrar <Chev /></BigLine>
            </Big>
            <Big $w={60}>
              <BigIcon><FindIcon /></BigIcon>
              Localizar e
              <BigLine>Selecionar <Chev /></BigLine>
            </Big>
          </GroupBody>
          <GroupLabel>Edição</GroupLabel>
        </Group>

        <Group $w={84}>
          <GroupBody>
            <Big $w={83}>
              <BigIcon><PdfIcon /></BigIcon>
              Crie
              <BigLine>um PDF</BigLine>
            </Big>
          </GroupBody>
          <GroupLabel>Adobe Acrobat</GroupLabel>
        </Group>

        <Collapse>
          <svg width="11" height="7" viewBox="0 0 11 7" fill="none" stroke="#555" strokeWidth="1.200"><path d="M.7 6 5.500 1.200 10.300 6" /></svg>
        </Collapse>
      </Ribbon>

      <FormulaBar>
        <NameBox>J4<Tri /></NameBox>
        <Dots><DotsIcon /></Dots>
        <FxBox><CancelIcon /><EnterIcon /><FxText>fx</FxText></FxBox>
        <FormulaInput>Vestido curto<FormulaChev /></FormulaInput>
      </FormulaBar>

      <SheetArea>
        <SheetGrid>
          <Corner><CornerTri /></Corner>
          {COLS.map((c, i) => (
            <ColHead key={c} $first={i === 0} $sel={c === 'J' || c === 'K' || c === 'L'}>
              {c === 'O' ? '' : c}
            </ColHead>
          ))}
          {renderCells()}
        </SheetGrid>
        <VScroll>
          <ScrollBtn><Tri s={9} r={180} /></ScrollBtn>
          <VThumb />
          <VTrack />
          <ScrollBtn $h={14}><Tri s={9} /></ScrollBtn>
        </VScroll>
      </SheetArea>

      <SheetTabs>
        <NavArrows><Mirror><SideTri c="#c6c6c6" /></Mirror><SideTri c="#c6c6c6" /></NavArrows>
        <SheetTab $w={79}>Produtos</SheetTab>
        <SheetTab $w={81} $active>Planilha1</SheetTab>
        <AddSheet><PlusCircle /></AddSheet>
        <HSplit><SplitDots /></HSplit>
        <HScroll>
          <ScrollBtn $w={15}><Mirror><SideTri /></Mirror></ScrollBtn>
          <HThumb />
          <HTrack />
          <ScrollBtn $w={15}><SideTri /></ScrollBtn>
        </HScroll>
      </SheetTabs>

      <StatusBar>
        Pronto
        <Views>
          <ViewBtn $on><ViewNormal /></ViewBtn>
          <ViewBtn><ViewLayout /></ViewBtn>
          <ViewBtn><ViewBreak /></ViewBtn>
        </Views>
        <Zoom>
          <svg width="8" height="2"><path d="M0 1h8" stroke="#444" strokeWidth="1.200" /></svg>
          <ZoomTrack><ZoomThumb /></ZoomTrack>
          <svg width="9" height="9"><path d="M0 4.500h9M4.500 0v9" stroke="#444" /></svg>
          <ZoomPct>100%</ZoomPct>
        </Zoom>
      </StatusBar>
    </Page>
  )
}
